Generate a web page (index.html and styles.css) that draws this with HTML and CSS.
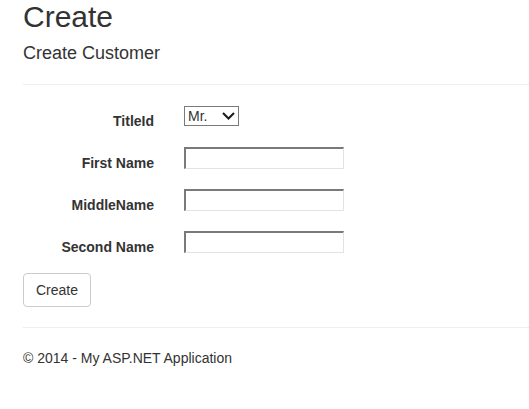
FILE: index.html
```html
<!DOCTYPE html>
<html>
<head>
<meta charset="utf-8">
<title>Create</title>
<link rel="stylesheet" href="styles.css">
</head>
<body>
<div class="container">
  <h2 class="page-title">Create</h2>
  <form class="form">
    <h4 class="subtitle">Create Customer</h4>
    <hr class="rule rule-top">
    <div class="form-group">
      <label class="control-label" for="TitleId">TitleId</label>
      <div class="control">
        <span class="select-wrap">
          <select id="TitleId" class="select"><option>Mr.</option><option>Mrs.</option><option>Ms.</option></select>
          <svg class="chevron" width="13" height="8" viewBox="0 0 13 8"><path d="M1 1 L6.5 6.5 L12 1" fill="none" stroke="#1a1a1a" stroke-width="2"/></svg>
        </span>
      </div>
    </div>
    <div class="form-group">
      <label class="control-label" for="FirstName">First Name</label>
      <div class="control"><input id="FirstName" class="text-input" type="text"></div>
    </div>
    <div class="form-group">
      <label class="control-label" for="MiddleName">MiddleName</label>
      <div class="control"><input id="MiddleName" class="text-input" type="text"></div>
    </div>
    <div class="form-group">
      <label class="control-label" for="SecondName">Second Name</label>
      <div class="control"><input id="SecondName" class="text-input" type="text"></div>
    </div>
    <div class="button-row">
      <button type="button" class="btn">Create</button>
    </div>
  </form>
  <hr class="rule">
  <footer class="footer">
    <p class="copy">&copy; 2014 - My ASP.NET Application</p>
  </footer>
</div>
</body>
</html>
```
FILE: styles.css
```css
html, body {
  margin: 0;
  padding: 0;
  background: #fff;
}
body {
  font-family: "Liberation Sans", Arial, sans-serif;
  font-size: 14px;
  line-height: 1.42857;
  color: #333;
}
.container {
  padding-left: 23px;
  overflow: hidden;
}
.page-title {
  font-size: 30px;
  font-weight: 500;
  line-height: 1.1;
  margin: 0 0 11px;
}
.subtitle {
  font-size: 18px;
  font-weight: 500;
  line-height: 1.1;
  margin: 0;
}
.rule {
  margin: 20px 0;
  border: 0;
  border-top: 1px solid #eee;
  height: 0;
}
.rule-top {
  margin-top: 20px;
  margin-bottom: 19px;
}
.form {
  margin: 0;
}
.form-group {
  display: grid;
  grid-template-columns: 131px auto;
  column-gap: 30px;
  margin-bottom: 15px;
}
.control-label {
  padding-top: 7px;
  line-height: 20px;
  text-align: right;
  font-weight: bold;
}
.control {
  line-height: 20px;
}
.text-input {
  display: block;
  box-sizing: border-box;
  width: 160px;
  height: 22px;
  margin: 1px 0 0;
  padding: 1px 2px;
  background: #fff;
  border-style: solid;
  border-width: 2px 1px 1px 2px;
  border-color: #7a7a7a #e3e3e3 #e3e3e3 #7a7a7a;
  font-family: "Liberation Sans", Arial, sans-serif;
  font-size: 14px;
  outline: none;
}
.select-wrap {
  position: relative;
  display: block;
  width: 55px;
  height: 20px;
  margin-top: 2px;
}
.select {
  -webkit-appearance: none;
  appearance: none;
  box-sizing: border-box;
  width: 55px;
  height: 20px;
  margin: 0;
  padding: 0 0 0 3px;
  border: 1px solid #7a7a7a;
  border-radius: 0;
  background: #fff;
  color: #333;
  font-family: "Liberation Sans", Arial, sans-serif;
  font-size: 14px;
  line-height: 18px;
  outline: none;
}
.chevron {
  position: absolute;
  right: 4px;
  top: 6px;
  pointer-events: none;
}
.button-row {
  padding-top: 1px;
}
.btn {
  display: inline-block;
  box-sizing: border-box;
  height: 34px;
  padding: 6px 12px;
  border: 1px solid #ccc;
  border-radius: 4px;
  background: #fff;
  color: #333;
  font-family: "Liberation Sans", Arial, sans-serif;
  font-size: 14px;
  line-height: 20px;
  vertical-align: top;
}
.footer {
  margin: 0;
}
.copy {
  margin: 0 0 10px;
  line-height: 20px;
}
```
